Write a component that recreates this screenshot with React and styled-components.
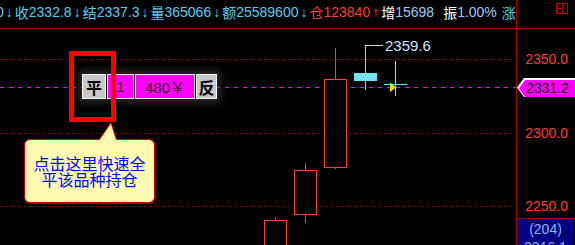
import React from 'react';
import styled, { createGlobalStyle } from 'styled-components';

const GlobalStyle = createGlobalStyle`
  html, body {
    margin: 0;
    padding: 0;
    background: #000;
  }
  body {
    font-family: "Liberation Sans", "Noto Sans CJK SC", sans-serif;
    overflow: hidden;
  }
`;

const tones = {
  cyan: '#54cff4',
  soft: '#a2c9f2',
  white: '#ffffff',
  red: '#ff3a3a',
};

/*  FRAME  */
const Frame = styled.div`
  width: 575px;
  height: 245px;
  display: flex;
  flex-direction: column;
  background: #000;
  overflow: hidden;
`;

/*  QUOTE BAR  */
const QuoteBar = styled.div`
  display: flex;
  height: 28px;
  flex-shrink: 0;
  border-bottom: 1px solid #a80000;
`;

const QuoteLine = styled.div`
  width: 516px;
  overflow: hidden;
  white-space: nowrap;
  font-size: 14px;
  line-height: 25px;
`;

const QuoteTrack = styled.div`
  display: flex;
  margin-left: -4px;
`;

const Field = styled.span`
  display: inline-flex;
  margin-left: ${p => p.$gap || 0}px;
`;

const Label = styled.span`
  font-family: "Noto Sans CJK SC", sans-serif;
  color: ${p => tones[p.$tone]};
`;

const Value = styled.span`
  color: ${p => tones[p.$tone]};
`;

const Arrow = styled.span`
  display: inline-block;
  width: 11px;
  text-align: center;
  color: ${p => tones[p.$tone]};
`;

const CornerCell = styled.div`
  width: 58px;
  box-sizing: border-box;
  border-left: 1px solid #a80000;
  display: flex;
  justify-content: flex-end;
  align-items: flex-start;
  padding: 3px 6px 0 0;
`;

/*  BODY  */
const Body = styled.div`
  display: flex;
  height: 216px;
`;

const Chart = styled.div`
  width: 516px;
  height: 216px;
  position: relative;
  overflow: hidden;
  svg {
    display: block;
  }
`;

const HighLabel = styled.div`
  position: absolute;
  left: 385px;
  top: 9px;
  font-size: 15px;
  line-height: 16px;
  color: #d2e2fc;
`;

/*  ORDER BAR  */
const OrderBar = styled.div`
  position: absolute;
  left: 82px;
  top: 45px;
  height: 25px;
  display: flex;
  gap: 1px;
  box-shadow: 0 0 7px 4px rgba(70, 70, 70, 0.55);
`;

const OrderCell = styled.div`
  width: ${p => p.$w}px;
  box-sizing: border-box;
  height: 25px;
  display: flex;
  align-items: center;
  justify-content: center;
  border: 1px solid #f4f4f4;
  background: ${p => (p.$accent ? '#ff00ff' : '#c8c8c8')};
  color: ${p => (p.$accent ? '#2a002a' : '#000')};
  font-size: ${p => (p.$accent ? 15 : 16)}px;
  font-weight: ${p => (p.$accent ? 400 : 700)};
  font-family: "Liberation Sans", "Noto Sans CJK SC", sans-serif;
`;

const Highlight = styled.div`
  position: absolute;
  left: 69px;
  top: 22px;
  width: 47px;
  height: 71px;
  box-sizing: border-box;
  border: 5px solid #ff0000;
`;

/*  CALLOUT  */
const Callout = styled.div`
  position: absolute;
  left: 24px;
  top: 110px;
  width: 131px;
  height: 64px;
  box-sizing: border-box;
  border: 1px solid #d40000;
  border-radius: 6px;
  box-shadow: 0 1px 0 #8a0000;
  background: #fafab2;
  display: flex;
  flex-direction: column;
  align-items: center;
  justify-content: center;
  color: #0000ff;
  font-family: "Noto Sans CJK SC", sans-serif;
  font-size: 16px;
`;

const CalloutLine = styled.div`
  height: 16px;
  line-height: 16px;
`;

const CalloutTail = styled.svg`
  position: absolute;
  left: 74px;
  top: -18px;
`;

/*  AXIS  */
const Axis = styled.div`
  width: 58px;
  box-sizing: border-box;
  border-left: 1px solid #a80000;
  position: relative;
`;

const AxisLabel = styled.div`
  position: absolute;
  right: 6px;
  top: ${p => p.$top}px;
  font-size: 14px;
  line-height: 16px;
  color: #ff3a3a;
`;

const PriceTag = styled.div`
  position: absolute;
  left: 0;
  top: 49px;
  width: 58px;
  height: 19px;
  background: #ffffff;
  clip-path: polygon(7px 0, 100% 0, 100% 100%, 7px 100%, 0 50%);
`;

const PriceTagFill = styled.div`
  position: absolute;
  left: 2px;
  top: 2px;
  right: 0;
  bottom: 0;
  background: #ff00ff;
  clip-path: polygon(6px 0, 100% 0, 100% 100%, 6px 100%, 0 50%);
  color: #000;
  font-size: 14px;
  line-height: 17px;
  padding-left: 7px;
`;

const StatBox = styled.div`
  position: absolute;
  left: 0;
  right: 0;
  top: 189px;
  bottom: 0;
  border-top: 1px solid #a80000;
  background: #000080;
  color: #8eb6f0;
  font-size: 14px;
  line-height: 18px;
  text-align: center;
  padding-top: 1px;
`;

const fields = [
  { value: '0', arrow: '↓' },
  { label: '收', value: '2332.8', arrow: '↓' },
  { label: '结', value: '2337.3', arrow: '↓' },
  { label: '量', value: '365066', arrow: '↓' },
  { label: '额', value: '25589600', arrow: '↓' },
  { label: '仓', value: '123840', arrow: '↑', tone: 'red' },
  { label: '增', value: '15698', labelTone: 'white', tone: 'soft' },
  { label: '振', value: '1.00%', labelTone: 'white', tone: 'soft', gap: 9 },
  { label: '涨', value: '(', gap: 5 },
];

const candles = [
  { x: 264.5, top: 220.5, bottom: 260, high: 217, low: 260 },
  { x: 294.5, top: 170.5, bottom: 214.5, high: 163, low: 223 },
  { x: 324.5, top: 79.5, bottom: 167.5, high: 48, low: 169 },
];

const grid = [59.5, 133.5, 206.5];

function WindowIcon() {
  return (
    <svg width="12" height="11" viewBox="0 0 12 11">
      <rect x="0.5" y="0.5" width="11" height="10" fill="none" stroke="#c00000" />
      <line x1="6.5" y1="0.5" x2="6.5" y2="10.5" stroke="#c00000" />
      <line x1="0.5" y1="5.5" x2="6.5" y2="5.5" stroke="#c00000" />
    </svg>
  );
}

function PriceChart() {
  return (
    <svg width="516" height="216" viewBox="0 29 516 216" shapeRendering="crispEdges">
      {grid.map(y => (
        <line key={y} x1="0" y1={y} x2="516" y2={y} stroke="#a00000" strokeDasharray="1 2" />
      ))}
      <line x1="0" y1="87.5" x2="516" y2="87.5" stroke="#ff00ff" strokeDasharray="4 5" />
      {candles.map(c => (
        <g key={c.x} stroke="#ff3c3c" fill="#000">
          <line x1={c.x + 11} y1={c.high} x2={c.x + 11} y2={c.top} />
          <line x1={c.x + 11} y1={c.bottom} x2={c.x + 11} y2={c.low} />
          <rect x={c.x} y={c.top} width="22" height={c.bottom - c.top} />
        </g>
      ))}
      <line x1="365.5" y1="45" x2="365.5" y2="90" stroke="#78e4fc" />
      <line x1="365" y1="45.5" x2="383" y2="45.5" stroke="#d8d8d8" />
      <rect x="354" y="73" width="23" height="8" fill="#72e4fc" />
      <line x1="395.5" y1="61" x2="395.5" y2="96" stroke="#70e8ff" />
      <line x1="384" y1="84.5" x2="407" y2="84.5" stroke="#70e8ff" />
      <polygon points="390,82.5 396,87.5 390,92" fill="#ffe000" shapeRendering="auto" />
    </svg>
  );
}

export default function App() {
  return (
    <Frame>
      <GlobalStyle />
      <QuoteBar>
        <QuoteLine>
          <QuoteTrack>
            {fields.map((f, index) => (
              <Field key={'field' + index} $gap={f.gap}>
                {f.label && <Label $tone={f.labelTone || f.tone || 'cyan'}>{f.label}</Label>}
                <Value $tone={f.tone || 'cyan'}>{f.value}</Value>
                {f.arrow && <Arrow $tone={f.tone || 'cyan'}>{f.arrow}</Arrow>}
              </Field>
            ))}
          </QuoteTrack>
        </QuoteLine>
        <CornerCell>
          <WindowIcon />
        </CornerCell>
      </QuoteBar>

      <Body>
        <Chart>
          <PriceChart />
          <HighLabel>2359.6</HighLabel>
          <OrderBar>
            <OrderCell $w={24}>平</OrderCell>
            <OrderCell $w={27} $accent>1</OrderCell>
            <OrderCell $w={60} $accent>480￥</OrderCell>
            <OrderCell $w={21}>反</OrderCell>
          </OrderBar>
          <Highlight />
          <Callout>
            <CalloutTail width="19" height="18" viewBox="0 0 19 18">
              <polygon points="0,18 12,0.5 17.5,18" fill="#fafab2" />
              <polyline points="0.5,17.5 12,0.8 17.5,17.5" fill="none" stroke="#d40000" />
              <rect x="1" y="17" width="16" height="1" fill="#fafab2" />
            </CalloutTail>
            <CalloutLine>点击这里快速全</CalloutLine>
            <CalloutLine>平该品种持仓</CalloutLine>
          </Callout>
        </Chart>

        <Axis>
          <AxisLabel $top={22}>2350.0</AxisLabel>
          <PriceTag>
            <PriceTagFill>2331.2</PriceTagFill>
          </PriceTag>
          <AxisLabel $top={96}>2300.0</AxisLabel>
          <AxisLabel $top={169}>2250.0</AxisLabel>
          <StatBox>
            (204)<br />2316.1
          </StatBox>
        </Axis>
      </Body>
    </Frame>
  );
}
